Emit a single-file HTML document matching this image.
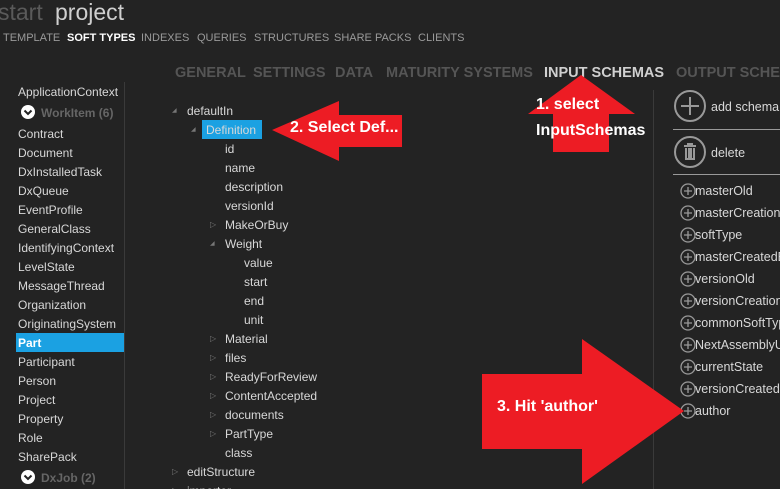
<html><head><style>
html,body{margin:0;width:780px;height:489px;overflow:hidden}
body{background:#232323;position:relative;font-family:"Segoe UI","Liberation Sans",sans-serif;color:#d8d8d8;font-size:12px}
.a{position:absolute;white-space:nowrap;line-height:16px}
.n{font-size:11px;color:#9a9a9a;top:30px}
.t{font-size:14.5px;font-weight:bold;color:#555;top:65px}
.r{font-size:16px;font-weight:bold;color:#fff}
.tri{color:#777;font-size:8px}
</style></head><body>
<div class="a" style="left:-2px;top:-3px;font-size:23px;line-height:30px;color:#5a5a5a">start</div>
<div class="a" style="left:55px;top:-3px;font-size:23px;line-height:30px;color:#cfcfcf">project</div>
<div class="a n" style="left:3px">TEMPLATE</div>
<div class="a n" style="left:67px;color:#fff;font-weight:bold">SOFT TYPES</div>
<div class="a n" style="left:141px">INDEXES</div>
<div class="a n" style="left:197px">QUERIES</div>
<div class="a n" style="left:254px">STRUCTURES</div>
<div class="a n" style="left:334px">SHARE PACKS</div>
<div class="a n" style="left:418px">CLIENTS</div>
<div class="a t" style="left:175px">GENERAL</div>
<div class="a t" style="left:253px">SETTINGS</div>
<div class="a t" style="left:335px">DATA</div>
<div class="a t" style="left:386px">MATURITY SYSTEMS</div>
<div class="a t" style="left:544px;color:#d0d0d0">INPUT SCHEMAS</div>
<div class="a t" style="left:676px">OUTPUT SCHEMAS</div>
<div style="position:absolute;left:124px;top:82px;width:1px;height:407px;background:#3a3a3a"></div>
<div style="position:absolute;left:653px;top:90px;width:1px;height:399px;background:#3a3a3a"></div>
<div style="position:absolute;left:16px;top:333px;width:108px;height:19px;background:#1ba1e2"></div>
<div id="L"></div>
<div style="position:absolute;left:202px;top:120px;width:60px;height:19px;background:#1ba1e2"></div>
<div id="T"></div>
<div class="a" style="left:711px;top:99px;font-size:12.5px">add schema</div>
<div class="a" style="left:711px;top:145px;font-size:12.5px">delete</div>
<svg style="position:absolute;left:0;top:0" width="780" height="489">
<g fill="#fff"><circle cx="28" cy="112" r="7"/><circle cx="28" cy="477" r="7"/></g>
<g stroke="#232323" stroke-width="2" fill="none"><path d="M24.5 110.5l3.5 3.5 3.5-3.5M24.5 475.5l3.5 3.5 3.5-3.5"/></g>
<g stroke="#999" stroke-width="2" fill="none"><circle cx="690" cy="106" r="15"/><path d="M690 97v18M681 106h18"/><circle cx="690" cy="152" r="15"/><path d="M684 146h12M686 148v11h8v-11M689 148v11M691 148v11M688 146v-2h4v2"/></g>
<path d="M673 129.5h107M673 174.5h107" stroke="#999"/>
<g id="P" stroke="#999" stroke-width="1.3" fill="none"></g>
<g fill="#ed1c24"><path d="M581 75L528 114H553V152H609V114H635Z"/><path d="M272 130L339 101V115H402V147H339V161Z"/><path d="M482 374H582V339L684 411L582 484V449H482Z"/></g>
</svg>
<div class="a r" style="left:536px;top:97px">1. select</div>
<div class="a r" style="left:536px;top:123px">InputSchemas</div>
<div class="a r" style="left:290px;top:120px">2. Select Def...</div>
<div class="a r" style="left:497px;top:399px">3. Hit 'author'</div>
<script>
var L=["ApplicationContext","*WorkItem (6)","Contract","Document","DxInstalledTask","DxQueue","EventProfile","GeneralClass","IdentifyingContext","LevelState","MessageThread","Organization","OriginatingSystem","Part","Participant","Person","Project","Property","Role","SharePack","*DxJob (2)"];
var y=[91,112,133,152,171,190,209,228,247,266,285,304,323,342,361,380,399,418,437,456,477],h="";
L.forEach(function(s,i){var st="left:18px;top:"+(y[i]-7)+"px;";if(s[0]=="*"){s=s.slice(1);st+="left:41px;color:#666;font-weight:bold;"}if(s=="Part")st+="color:#fff;font-weight:bold;";h+='<div class="a" style="'+st+'">'+s+'</div>'});
document.getElementById("L").innerHTML=h;
var T=[["defaultIn",187,110,"◢"],["Definition",206,129,"◢"],["id",225,148],["name",225,167],["description",225,186],["versionId",225,205],["MakeOrBuy",225,224,"▷"],["Weight",225,243,"◢"],["value",244,262],["start",244,281],["end",244,300],["unit",244,319],["Material",225,338,"▷"],["files",225,357,"▷"],["ReadyForReview",225,376,"▷"],["ContentAccepted",225,395,"▷"],["documents",225,414,"▷"],["PartType",225,433,"▷"],["class",225,452],["editStructure",187,471,"▷"],["importer",187,490,"▷"]];
h="";T.forEach(function(t){h+='<div class="a" style="left:'+t[1]+'px;top:'+(t[2]-7)+'px">'+t[0]+'</div>';if(t[3])h+='<div class="a tri" style="left:'+(t[1]-15)+'px;top:'+(t[2]-7)+'px">'+t[3]+'</div>'});
document.getElementById("T").innerHTML=h;
var R=["masterOld","masterCreationDate","softType","masterCreatedBy","versionOld","versionCreationDate","commonSoftType","NextAssemblyUnit","currentState","versionCreatedBy","author"];h="";var p="";
R.forEach(function(s,i){var c=191+22*i;h+='<div class="a" style="left:695px;top:'+(c-8)+'px;font-size:12.5px">'+s+'</div>';p+='<circle cx="688" cy="'+c+'" r="7"/><path d="M684 '+c+'h8M688 '+(c-4)+'v8"/>'});
document.getElementById("P").innerHTML=p;
document.getElementById("T").innerHTML+=h;
document.querySelectorAll('.tri').forEach(function(e){if(e.textContent=="◢")e.style.fontSize="6px"});
</script>
</body></html>
